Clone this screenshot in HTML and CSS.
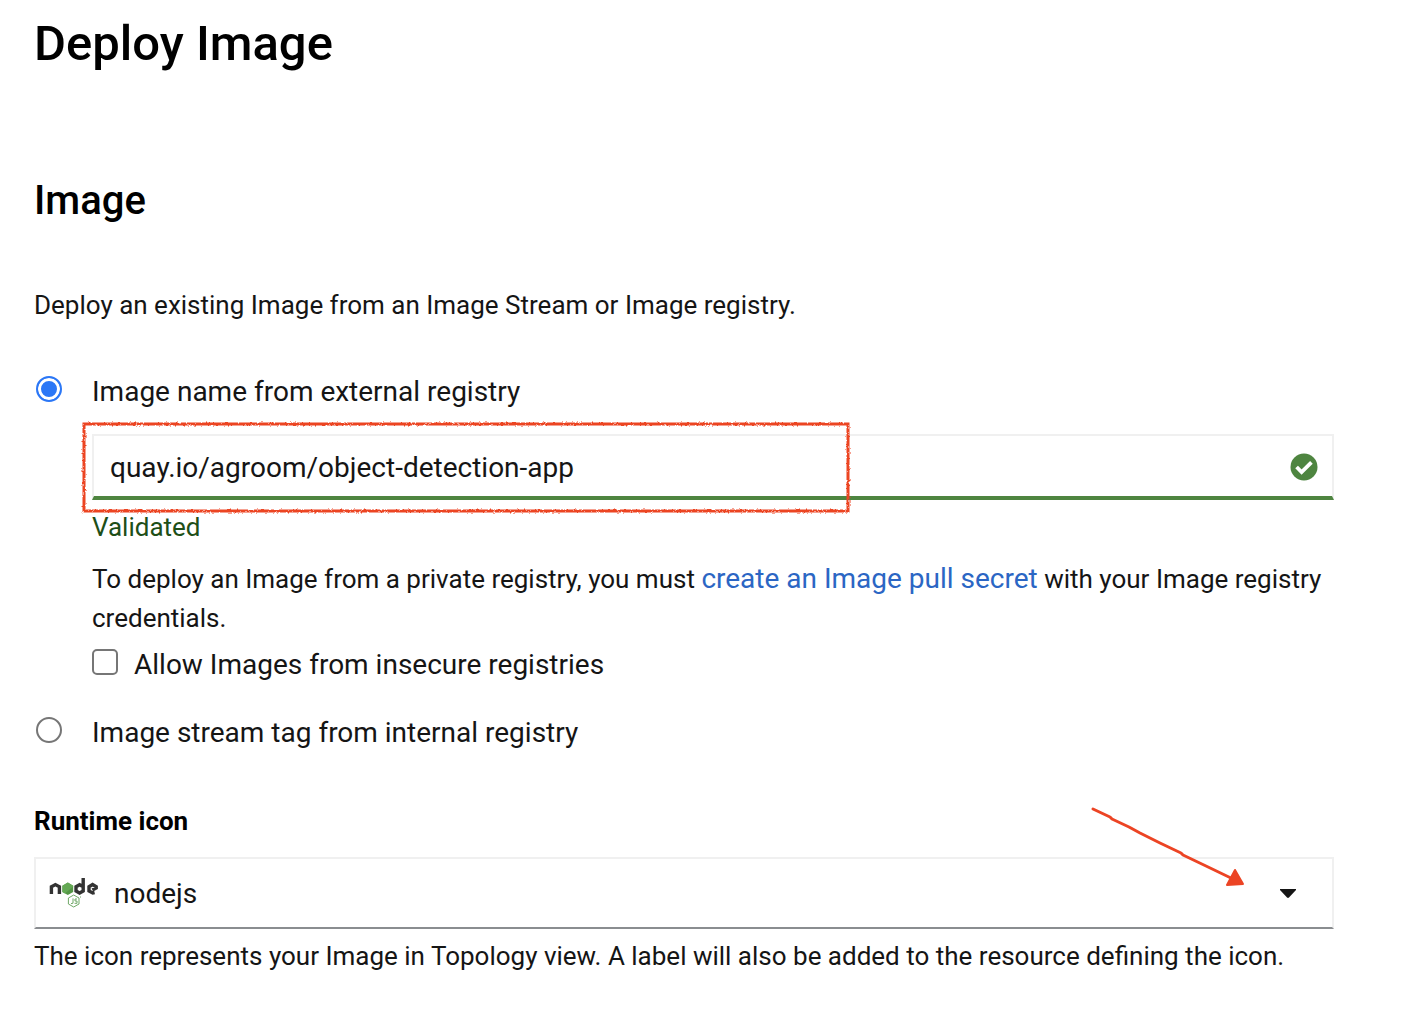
FILE: index.html
```html
<!DOCTYPE html>
<html lang="en">
<head>
<meta charset="utf-8">
<meta name="viewport" content="width=device-width, initial-scale=1">
<title>Deploy Image</title>
<link rel="stylesheet" href="styles.css">
</head>
<body>
<main class="page">
  <h1 class="page-title">Deploy Image</h1>
  <form class="form">
    <h2 class="section-title">Image</h2>
    <p class="intro">Deploy an existing Image from an Image Stream or Image registry.</p>

    <div class="choice choice-first">
      <input class="radio" type="radio" name="source" id="external" checked>
      <label class="choice-label" for="external">Image name from external registry</label>
    </div>

    <div class="nested">
      <div class="field">
        <input class="text-input" type="text" aria-label="Image name" value="quay.io/agroom/object-detection-app">
        <svg class="valid-icon" viewBox="0 0 28 28" aria-hidden="true">
          <circle cx="14" cy="14" r="13.5" fill="#4e8540"/>
          <path d="M6.6 14 L11.6 19 L21.4 9.4" fill="none" stroke="#fff" stroke-width="3.8"/>
        </svg>
        <svg class="highlight" viewBox="0 0 774 96" aria-hidden="true">
          <filter id="rough" x="-5%" y="-10%" width="110%" height="120%">
            <feTurbulence type="fractalNoise" baseFrequency="0.45" numOctaves="2" seed="4"/>
            <feDisplacementMap in="SourceGraphic" scale="3" xChannelSelector="R" yChannelSelector="G"/>
          </filter>
          <rect x="5" y="4" width="764" height="87" fill="none" stroke="#ec4424" stroke-width="3" filter="url(#rough)"/>
        </svg>
      </div>
      <p class="validated">Validated</p>
      <p class="help">To deploy an Image from a private registry, you must <a class="link" href="#">create an Image pull secret</a> with your Image registry credentials.</p>
      <div class="check-row">
        <input class="checkbox" type="checkbox" id="insecure">
        <label class="choice-label" for="insecure">Allow Images from insecure registries</label>
      </div>
    </div>

    <div class="choice choice-second">
      <input class="radio" type="radio" name="source" id="internal">
      <label class="choice-label" for="internal">Image stream tag from internal registry</label>
    </div>

    <label class="field-label" for="runtime">Runtime icon</label>
    <div class="select-wrap">
      <select class="select" id="runtime"><option>nodejs</option></select>
      <svg class="node-logo" viewBox="0 0 50 32" aria-hidden="true">
        <g fill="none" stroke="#333" stroke-width="3.4">
          <path d="M2.4 17 V9.8 L6.4 7.6 L10.4 9.8 V17"/>
          <path d="M34.2 1 V14 L30.6 16 L27 14 V9.8 L30.6 7.8 L34.2 9.8"/>
          <path d="M45.6 15.6 L43.8 16 L40 14 V9.8 L43.6 7.6 L47.2 9.8 V11 L43.4 13"/>
        </g>
        <path d="M18.8 5.6 L24.2 8.7 V14.9 L18.8 18 L13.4 14.9 V8.7 Z" fill="#549646"/>
        <path d="M18.8 5.6 L24.2 8.7 V9.4 L16 16.4 L13.4 14.9 V8.7 Z" fill="#64a854"/>
        <g fill="none" stroke="#6fa866" stroke-width="1">
          <path d="M24.7 18 L30 21 V27 L24.7 30 L19.4 27 V21 Z"/>
          <path d="M24 21.4 V26.2 L22 26.6 M28 22 H26 V24 H28 V26.3 H25.6"/>
          <path d="M31 20 h1"/>
        </g>
      </svg>
      <svg class="caret" viewBox="0 0 16 9" aria-hidden="true"><path d="M0 0 H16 V1 L9 8.5 Q8 9.4 7 8.5 L0 1 Z" fill="#151515"/></svg>
      <svg class="pointer" viewBox="0 0 154 82" aria-hidden="true">
        <path d="M2 3 L19 11 L21 13 L38 21 L49 27 L51 28 L69 37 L90 47 L92 49 L115 60 L142 73" fill="none" stroke="#ec4424" stroke-width="3" stroke-linecap="round" stroke-linejoin="round"/>
        <path d="M144 64 L152 78 L136 79 Z" fill="#ec4424" stroke="#ec4424" stroke-width="2" stroke-linejoin="round"/>
      </svg>
    </div>
    <p class="select-help">The icon represents your Image in Topology view. A label will also be added to the resource defining the icon.</p>
  </form>
</main>
</body>
</html>
```
FILE: styles.css
```css
* { box-sizing: border-box; }

body {
  margin: 0;
  background: #fff;
  color: #151515;
  font-family: Roboto, "Liberation Sans", sans-serif;
  font-size: 26px;
  line-height: 39px;
}

h1, h2, p { margin: 0; }

.page { padding: 8px 92px 40px 34px; }

.page-title {
  color: #000;
  font-size: 49px;
  font-weight: 500;
  line-height: 72px;
}

.section-title {
  margin-top: 95px;
  color: #000;
  font-size: 40px;
  font-weight: 500;
  line-height: 52px;
}

.intro { margin-top: 59px; }

.choice {
  display: flex;
  align-items: center;
  gap: 30px;
}

.choice-first { margin-top: 47px; }
.choice-second { margin-top: 29px; }

.choice-label { font-size: 28px; }

.radio, .checkbox {
  appearance: none;
  flex: none;
  width: 26px;
  height: 26px;
  margin: 0 0 6px;
  border: 2px solid #767676;
  background: #fff;
}

.radio { margin-left: 2px; border-radius: 50%; }

.radio:checked {
  border-color: #2b77f6;
  background: #2b77f6;
  box-shadow: inset 0 0 0 3px #fff;
}

.checkbox { border-radius: 5px; }

.nested { padding-left: 58px; }

.field {
  position: relative;
  display: grid;
  align-items: center;
  margin-top: 23px;
}

.text-input {
  grid-area: 1 / 1;
  width: 100%;
  height: 66px;
  padding: 2px 60px 0 16px;
  border: 2px solid #f0f0f0;
  border-bottom: 4px solid #4e8540;
  outline: 0;
  background: #fff;
  color: #151515;
  font: inherit;
  font-size: 28px;
}

.valid-icon {
  grid-area: 1 / 1;
  justify-self: end;
  width: 28px;
  height: 28px;
  margin-right: 16px;
}

.highlight {
  position: absolute;
  top: -14px;
  left: -13px;
  width: 774px;
  height: 96px;
  pointer-events: none;
}

.validated { margin-top: 8px; color: #1e4f18; }

.help { margin-top: 12px; }

.link {
  color: #2b66c4;
  font-size: 28px;
  text-decoration: none;
}

.check-row {
  display: flex;
  align-items: center;
  gap: 16px;
  margin-top: 7px;
}

.field-label {
  display: block;
  margin-top: 50px;
  color: #000;
  font-weight: 700;
}

.select-wrap {
  position: relative;
  display: grid;
  align-items: center;
  margin-top: 16px;
}

.select {
  appearance: none;
  grid-area: 1 / 1;
  width: 100%;
  height: 72px;
  padding: 0 80px 0 78px;
  border: 2px solid #f0f0f0;
  border-bottom-color: #8a8d90;
  border-radius: 0;
  background: #fff;
  color: #151515;
  font: inherit;
  font-size: 28px;
}

.node-logo {
  grid-area: 1 / 1;
  width: 50px;
  height: 32px;
  margin-left: 15px;
  pointer-events: none;
}

.caret {
  grid-area: 1 / 1;
  justify-self: end;
  width: 16px;
  height: 9px;
  margin-right: 38px;
  pointer-events: none;
}

.pointer {
  position: absolute;
  top: -51px;
  right: 89px;
  width: 154px;
  height: 82px;
  pointer-events: none;
}

.select-help { margin-top: 8px; }
```
